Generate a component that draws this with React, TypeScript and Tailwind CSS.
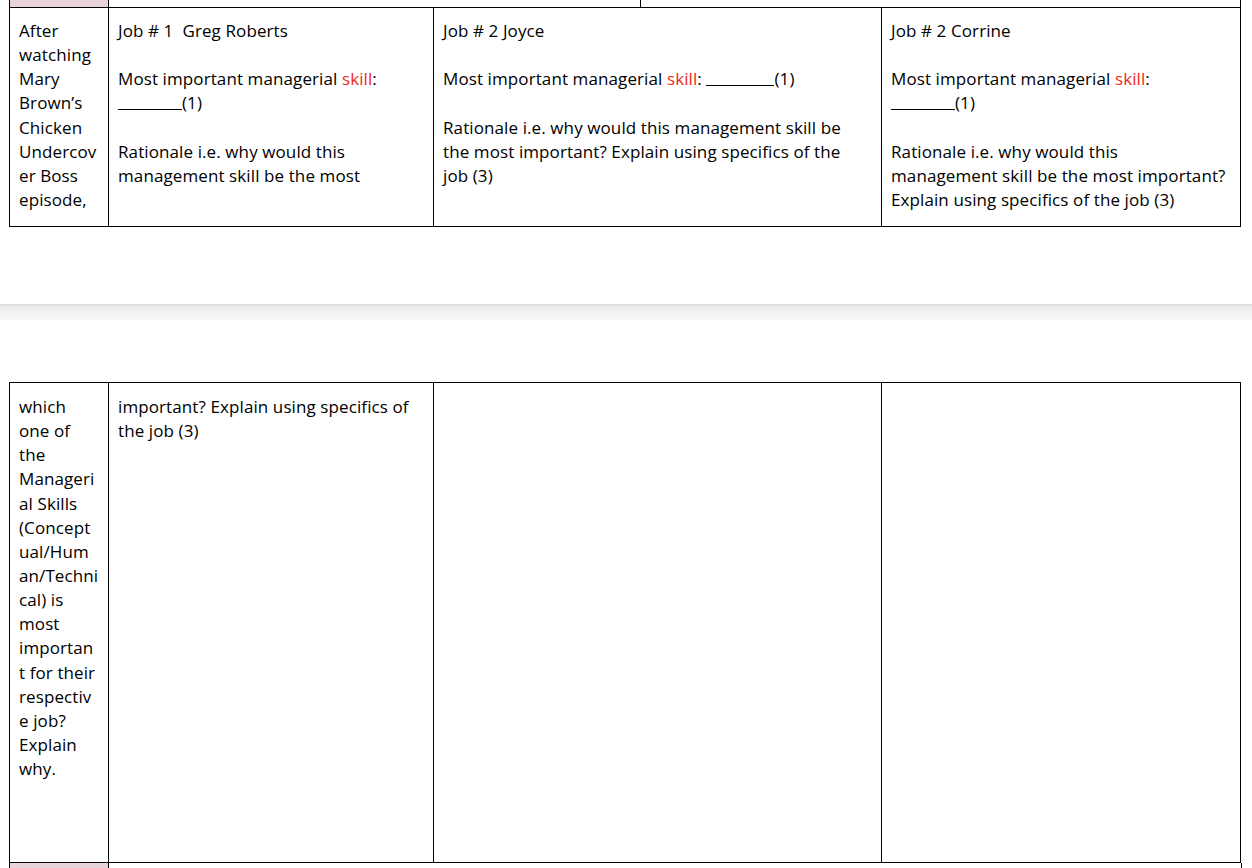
const Red = ({ children }: { children: React.ReactNode }) => (
  <span className="text-[#ec2a22]">{children}</span>
);

const Blank = ({ w = "w-[64px]" }: { w?: string }) => (
  <span className={"inline-block h-[1px] bg-black align-[-1px] " + w}></span>
);

const Lines = ({ lines }: { lines: React.ReactNode[] }) => (
  <div className="flex flex-col">
    {lines.map((l, i) => (
      <div key={i} className="whitespace-pre h-[24.15px]">
        {l === "" ? "\u00a0" : l}
      </div>
    ))}
  </div>
);

const cell = "border-r border-b border-black pl-[9px] pt-[11px] overflow-hidden";
const cell2 = "border-r border-b border-black pl-[9px] pt-[12px] overflow-hidden";

const App = () => {
  const skill = (
    <>
      Most important managerial <Red>skill</Red>:
    </>
  );

  return (
    <div className="bg-white w-[1252px] h-[868px] overflow-hidden text-black text-[17px] tracking-[0.1px] leading-[24px] font-['Open_Sans',sans-serif]">
      {/* tail of previous row */}
      <div className="ml-[9px] grid grid-cols-[99px_532px_600px] h-[7px] border-l border-black w-[1232px]">
        <div className="bg-[#e8d3dc] border-r border-black"></div>
        <div className="border-r border-black"></div>
        <div className="border-r border-black"></div>
      </div>

      {/* first table */}
      <div className="ml-[9px] w-[1232px] grid grid-cols-[99px_325px_448px_359px] border-t border-l border-black">
        <div className={cell + " h-[219px]"}>
          <Lines lines={["After", "watching", "Mary", "Brown’s", "Chicken", "Undercov", "er Boss", "episode,"]} />
        </div>
        <div className={cell}>
          <Lines
            lines={[
              "Job # 1  Greg Roberts",
              "",
              skill,
              <><Blank />(1)</>,
              "",
              "Rationale i.e. why would this",
              "management skill be the most",
            ]}
          />
        </div>
        <div className={cell}>
          <Lines
            lines={[
              "Job # 2 Joyce",
              "",
              <>{skill} <Blank w="w-[68px]" />(1)</>,
              "",
              "Rationale i.e. why would this management skill be",
              "the most important? Explain using specifics of the",
              "job (3)",
            ]}
          />
        </div>
        <div className={cell}>
          <Lines
            lines={[
              "Job # 2 Corrine",
              "",
              skill,
              <><Blank />(1)</>,
              "",
              "Rationale i.e. why would this",
              "management skill be the most important?",
              "Explain using specifics of the job (3)",
            ]}
          />
        </div>
      </div>

      {/* page break */}
      <div className="mt-[77px] h-[16px] border-t-2 border-[#e0e0e2] bg-gradient-to-b from-[#ececee] via-[#f3f3f5] to-[#f7f7f9]"></div>

      {/* second table */}
      <div className="mt-[62px] ml-[9px] w-[1232px] grid grid-cols-[99px_325px_448px_359px] border-t border-l border-black">
        <div className={cell2 + " h-[480px]"}>
          <Lines
            lines={[
              "which",
              "one of",
              "the",
              "Manageri",
              "al Skills",
              "(Concept",
              "ual/Hum",
              "an/Techni",
              "cal) is",
              "most",
              "importan",
              "t for their",
              "respectiv",
              "e job?",
              "Explain",
              "why.",
            ]}
          />
        </div>
        <div className={cell2}>
          <Lines lines={["important? Explain using specifics of", "the job (3)"]} />
        </div>
        <div className={cell2}></div>
        <div className={cell2}></div>
      </div>

      {/* start of next row */}
      <div className="ml-[9px] w-[1232px] grid grid-cols-[99px_1133px] h-[10px] border-l border-black">
        <div className="bg-[#e8d3dc] border-r border-black"></div>
        <div className="border-r border-black"></div>
      </div>
    </div>
  );
};

export default App;
